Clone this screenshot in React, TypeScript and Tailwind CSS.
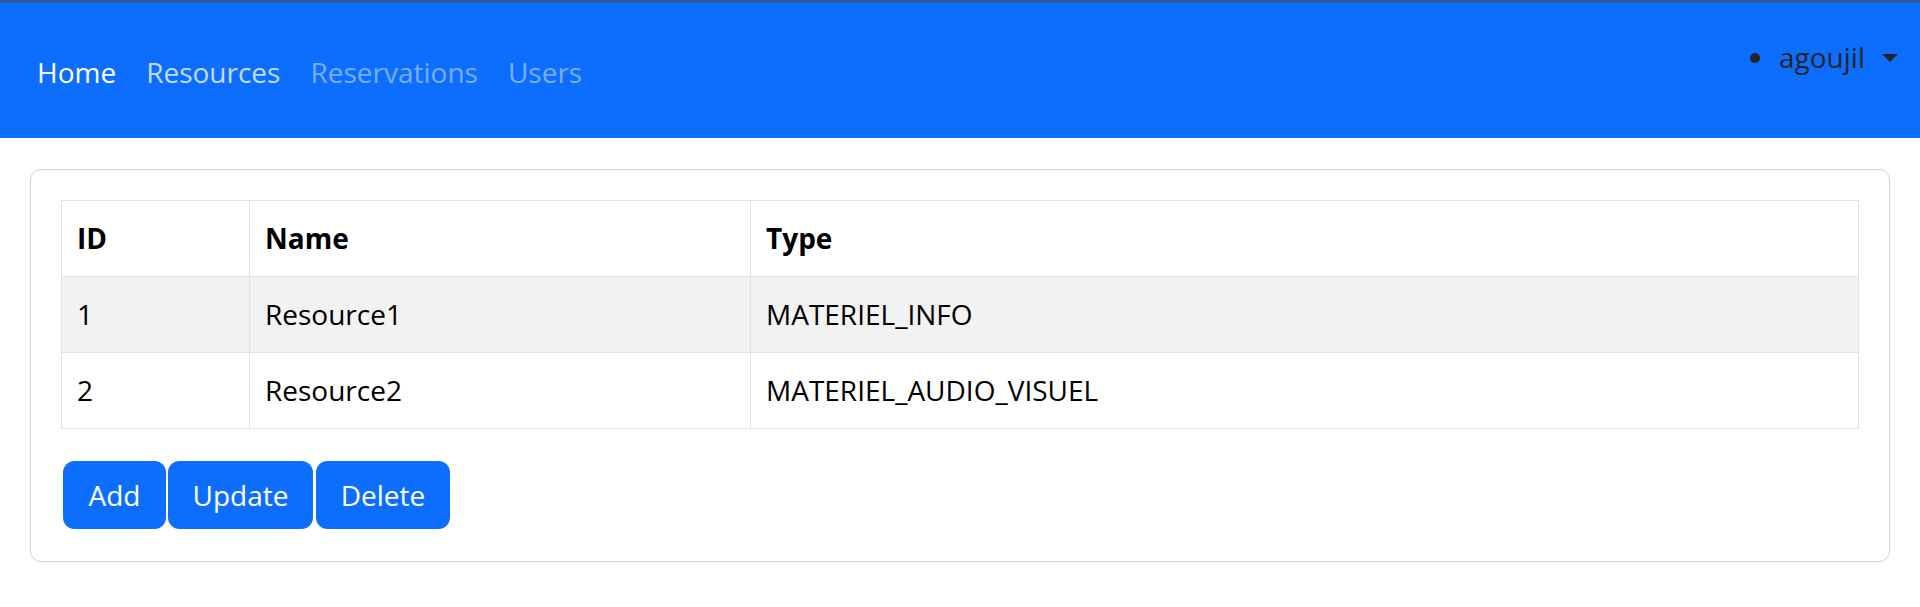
import React from "react";

const rows = [
  { id: "1", name: "Resource1", type: "MATERIEL_INFO" },
  { id: "2", name: "Resource2", type: "MATERIEL_AUDIO_VISUEL" },
];

export default function App() {
  return (
    <div className="min-h-screen bg-white font-['Open_Sans','Noto_Sans',sans-serif] text-[28px]">
      <div className="h-[3px] bg-[#2a5b9c]" />
      <nav className="flex h-[135px] items-start justify-between bg-[#0d6efd] px-[22px] pt-[32px] pb-[28px]">
        <ul className="flex">
          <li>
            <a className="block px-[15px] py-[15px] leading-[45px] text-white">Home</a>
          </li>
          <li>
            <a className="block px-[15px] py-[15px] leading-[45px] text-white/75">Resources</a>
          </li>
          <li>
            <a className="block px-[15px] py-[15px] leading-[45px] text-white/45">Reservations</a>
          </li>
          <li>
            <a className="block px-[15px] py-[15px] leading-[45px] text-white/45">Users</a>
          </li>
        </ul>
        <div className="flex items-center leading-[45px] text-[#212529]">
          <span className="mr-[19px] h-[10px] w-[10px] rounded-full bg-[#212529]" />
          <span>agoujil</span>
          <span className="ml-[17px] h-0 w-0 border-x-[8.5px] border-t-[8px] border-x-transparent border-t-[#212529]" />
        </div>
      </nav>
      <div className="mx-[30px] mt-[31px] rounded-[11px] border border-[#d2d2d2] px-[30px] pt-[30px] pb-[32px]">
        <table className="w-full border-collapse border border-[#dee2e6] text-black">
          <thead>
            <tr>
              <th className="w-[188px] border border-[#dee2e6] px-[15px] py-[15px] text-left font-bold leading-[45px]">ID</th>
              <th className="w-[501px] border border-[#dee2e6] px-[15px] py-[15px] text-left font-bold leading-[45px]">Name</th>
              <th className="border border-[#dee2e6] px-[15px] py-[15px] text-left font-bold leading-[45px]">Type</th>
            </tr>
          </thead>
          <tbody>
            {rows.map((r, i) => (
              <tr key={r.id} className={i % 2 === 0 ? "bg-[#f2f2f2]" : "bg-white"}>
                <td className="border border-[#dee2e6] px-[15px] py-[15px] leading-[45px]">{r.id}</td>
                <td className="border border-[#dee2e6] px-[15px] py-[15px] leading-[45px]">{r.name}</td>
                <td className="border border-[#dee2e6] px-[15px] py-[15px] leading-[45px]">{r.type}</td>
              </tr>
            ))}
          </tbody>
        </table>
        <div className="ml-[2px] mt-[32px] flex">
          <button className="flex h-[68px] w-[103px] items-center justify-center rounded-[11px] border border-[#0d6efd] bg-[#0d6efd] text-white">Add</button>
          <button className="ml-[2px] flex h-[68px] w-[145px] items-center justify-center rounded-[11px] border border-[#0d6efd] bg-[#0d6efd] text-white">Update</button>
          <button className="ml-[3px] flex h-[68px] w-[134px] items-center justify-center rounded-[11px] border border-[#0d6efd] bg-[#0d6efd] text-white">Delete</button>
        </div>
      </div>
    </div>
  );
}
